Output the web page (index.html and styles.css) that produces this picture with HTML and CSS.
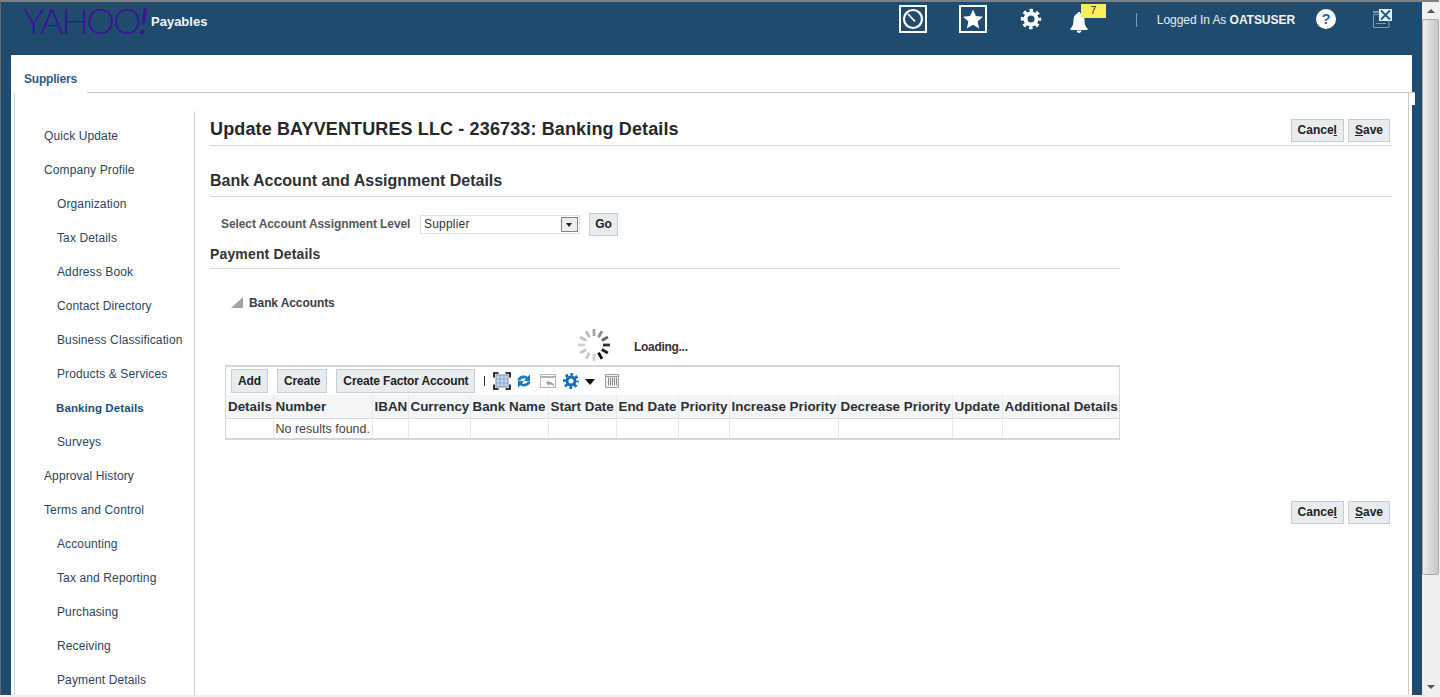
FILE: index.html
```html
<!doctype html>
<html lang="en">
  <head>
    <meta charset="UTF-8" />
    <meta name="viewport" content="width=device-width, initial-scale=1.0" />
    <title>Update BAYVENTURES LLC - 236733: Banking Details</title>
    <link rel="stylesheet" href="styles.css">
  </head>
  <body>
    <div class="window">
      <div class="app">
        <header class="header">
          <div class="logo">YAHOO<span class="logo-bang">!</span></div>
          <div class="app-name">Payables</div>
          <div class="header-tools">
            <span class="box-icon">
              <svg width="24" height="24" viewBox="0 0 24 24">
                <circle cx="12" cy="12" r="9" fill="none" stroke="#fff" stroke-width="2.200" />
                <path d="M7 7L14 14.500" stroke="#fff" stroke-width="1.800" />
              </svg>
            </span>
            <span class="box-icon box-star">
              <svg width="24" height="24" viewBox="0 0 24 24">
                <path d="M12 2.500l2.900 6.600 7.100.7-5.400 4.700 1.600 7-6.200-3.700-6.200 3.700 1.600-7L2 9.800l7.100-.7z" fill="#fff" />
              </svg>
            </span>
            <span class="gear-icon">
              <svg width="22" height="22" viewBox="0 0 22 22">
                <circle cx="11" cy="11" r="5.500" fill="none" stroke="#fff" stroke-width="4" />
                <circle cx="11" cy="11" r="8.500" fill="none" stroke="#fff" stroke-width="3.400" stroke-dasharray="3.400 3.280" stroke-dashoffset="1.700" />
              </svg>
            </span>
            <span class="bell-icon">
              <svg width="18" height="21" viewBox="0 0 18 21">
                <path d="M9 0C8 0 7.500.7 7.500 1.500 4.500 2.300 3.500 5 3.500 8c0 4-.8 6.500-3 8.500V18h17v-1.500c-2.200-2-3-4.500-3-8.500 0-3-1-5.700-4-6.500C10.500.7 10 0 9 0zM6.500 18.500C6.700 20 7.800 21 9 21s2.300-1 2.500-2.500z" fill="#fff" />
              </svg>
              <span class="badge">7</span>
            </span>
            <span class="tool-sep"></span>
            <span class="logged-in">Logged In As <b>OATSUSER</b></span>
            <span class="help-icon">?</span>
            <span class="close-icon">
              <svg width="20" height="22" viewBox="0 0 20 22">
                <path d="M0 2h6v2H0z" fill="#7d9ab3" />
                <path d="M.5 5.500h15.500v13H.5z" fill="none" stroke="#7d9ab3" />
                <path d="M3 14.500h10" stroke="#7d9ab3" />
                <rect x="6" y="0" width="13" height="12" fill="#e4f0fa" />
                <path d="M8 1.500l9 9M17 1.500l-9 9" stroke="#1f5a8e" stroke-width="1.800" />
              </svg>
            </span>
          </div>
        </header>

        <div class="frame">
          <div class="tabs">
            <div class="tab">Suppliers</div>
            <div class="tab-line"></div>
          </div>
          <div class="panel">
            <nav class="side">
              <a>Quick Update</a>
              <a>Company Profile</a>
              <a class="sub">Organization</a>
              <a class="sub">Tax Details</a>
              <a class="sub">Address Book</a>
              <a class="sub">Contact Directory</a>
              <a class="sub">Business Classification</a>
              <a class="sub">Products &amp; Services</a>
              <a class="sub current">Banking Details</a>
              <a class="sub">Surveys</a>
              <a>Approval History</a>
              <a>Terms and Control</a>
              <a class="sub">Accounting</a>
              <a class="sub">Tax and Reporting</a>
              <a class="sub">Purchasing</a>
              <a class="sub">Receiving</a>
              <a class="sub">Payment Details</a>
            </nav>

            <main class="main">
              <div class="title-row">
                <h1>Update BAYVENTURES LLC - 236733: Banking Details</h1>
                <div class="actions">
                  <button class="btn">Cance<u>l</u></button>
                  <button class="btn"><u>S</u>ave</button>
                </div>
              </div>

              <h2>Bank Account and Assignment Details</h2>

              <div class="level-row">
                <label for="level">Select Account Assignment Level</label>
                <div class="select" id="level">
                  <span>Supplier</span>
                  <span class="select-arrow"></span>
                </div>
                <button class="btn btn-go">Go</button>
              </div>

              <div class="narrow">
                <h3>Payment Details</h3>

                <div class="disclosure">
                  <svg width="12" height="12" viewBox="0 0 12 12"><path d="M12 0V11H0z" fill="#a3a3a3" /></svg>
                  <span>Bank Accounts</span>
                </div>

                <div class="loading">
                  <svg class="spinner" width="34" height="34" viewBox="-17 -17 34 34" stroke-width="2.800">
                    <line x1="0" y1="-9" x2="0" y2="-16" stroke="#a5a5a5" />
                    <line x1="0" y1="-9" x2="0" y2="-16" stroke="#8d8d8d" transform="rotate(30)" />
                    <line x1="0" y1="-9" x2="0" y2="-16" stroke="#666" transform="rotate(60)" />
                    <line x1="0" y1="-9" x2="0" y2="-16" stroke="#333" transform="rotate(90)" />
                    <line x1="0" y1="-9" x2="0" y2="-16" stroke="#222" transform="rotate(120)" />
                    <line x1="0" y1="-9" x2="0" y2="-16" stroke="#000" transform="rotate(150)" />
                    <line x1="0" y1="-9" x2="0" y2="-16" stroke="#d0d0d0" transform="rotate(180)" />
                    <line x1="0" y1="-9" x2="0" y2="-16" stroke="#c8c8c8" transform="rotate(210)" />
                    <line x1="0" y1="-9" x2="0" y2="-16" stroke="#c8c8c8" transform="rotate(240)" />
                    <line x1="0" y1="-9" x2="0" y2="-16" stroke="#d0d0d0" transform="rotate(270)" />
                    <line x1="0" y1="-9" x2="0" y2="-16" stroke="#c4c4c4" transform="rotate(300)" />
                    <line x1="0" y1="-9" x2="0" y2="-16" stroke="#bbb" transform="rotate(330)" />
                  </svg>
                  <span>Loading...</span>
                </div>

                <div class="table-box">
                  <div class="toolbar">
                    <button class="btn btn-tool">Add</button>
                    <button class="btn btn-tool">Create</button>
                    <button class="btn btn-tool">Create Factor Account</button>
                    <span class="bar-sep"></span>
                    <svg class="tb-icon tb-gap-5" width="18" height="18" viewBox="0 0 18 18">
                      <rect x="3" y="3" width="12" height="12" fill="#c6d8ee" stroke="#6d8fb8" />
                      <path d="M3 7h12M3 11h12M7 3v12M11 3v12" stroke="#8aa6c8" />
                      <path d="M1 5.500V1h4.500M12.500 1H17v4.500M17 12.500V17h-4.500M5.500 17H1v-4.500" fill="none" stroke="#000" stroke-width="1.600" />
                    </svg>
                    <svg class="tb-icon tb-gap-8" width="16" height="16" viewBox="0 0 16 16">
                      <path d="M1.500 7.500C2 3.500 7.500 1 11.500 3.800L14 1.500V8H8l2-2.200C7.800 4.600 5 5.500 4.500 7.500z" fill="#0f7cc4" />
                      <path d="M14.500 8.500C14 12.500 8.500 15 4.500 12.200L2 14.500V8h6l-2 2.200c2.200 1.200 5 .3 5.500-1.700z" fill="#0f7cc4" />
                    </svg>
                    <svg class="tb-icon tb-gap-6" width="17" height="15" viewBox="0 0 17 15">
                      <path d="M.5.500h15v13H.5z" fill="#fff" stroke="#b3b3b3" />
                      <path d="M1 3h14" stroke="#b3b3b3" stroke-width="2" />
                      <path d="M6 9l3-3v2c3 0 5 1 5 5-1-2-2.500-2.500-5-2.500V12z" fill="#a3a3a3" />
                    </svg>
                    <svg class="tb-icon" width="16" height="16" viewBox="0 0 16 16">
                      <circle cx="8" cy="8" r="4" fill="none" stroke="#0f6fbd" stroke-width="3" />
                      <circle cx="8" cy="8" r="6.500" fill="none" stroke="#0f6fbd" stroke-width="3" stroke-dasharray="2.550 2.550" stroke-dashoffset="1.270" />
                    </svg>
                    <span class="menu-arrow"></span>
                    <svg class="tb-icon" width="14" height="14" viewBox="0 0 14 14">
                      <path d="M.5.500h13v13H.5z" fill="#f2f2f2" stroke="#a0a0a0" />
                      <path d="M1 2.500h12" stroke="#a0a0a0" />
                      <path d="M3.500 3.500v8M5.500 3.500v8M7.500 3.500v8M9.500 3.500v8M11.500 3.500v8" stroke="#888" />
                    </svg>
                  </div>

                  <table class="grid">
                    <colgroup>
                      <col class="c-details" />
                      <col class="c-number" />
                      <col class="c-iban" />
                      <col class="c-currency" />
                      <col class="c-bank" />
                      <col class="c-start" />
                      <col class="c-end" />
                      <col class="c-priority" />
                      <col class="c-increase" />
                      <col class="c-decrease" />
                      <col class="c-update" />
                      <col class="c-additional" />
                    </colgroup>
                    <thead>
                      <tr>
                        <th>Details</th>
                        <th>Number</th>
                        <th>IBAN</th>
                        <th>Currency</th>
                        <th>Bank Name</th>
                        <th>Start Date</th>
                        <th>End Date</th>
                        <th>Priority</th>
                        <th>Increase Priority</th>
                        <th>Decrease Priority</th>
                        <th>Update</th>
                        <th>Additional Details</th>
                      </tr>
                    </thead>
                    <tbody>
                      <tr>
                        <td></td>
                        <td>No results found.</td>
                        <td></td>
                        <td></td>
                        <td></td>
                        <td></td>
                        <td></td>
                        <td></td>
                        <td></td>
                        <td></td>
                        <td></td>
                        <td></td>
                      </tr>
                    </tbody>
                  </table>
                </div>
              </div>

              <div class="actions actions-bottom">
                <button class="btn">Cance<u>l</u></button>
                <button class="btn"><u>S</u>ave</button>
              </div>
            </main>
          </div>
        </div>
      </div>

      <div class="scrollbar">
        <div class="scroll-btn"><span class="arrow-up"></span></div>
        <div class="scroll-thumb"></div>
        <div class="scroll-track"></div>
        <div class="scroll-btn"><span class="arrow-down"></span></div>
      </div>
    </div>
  </body>
</html>
```

FILE: styles.css
```css
* {
  box-sizing: border-box;
}

html,
body {
  margin: 0;
  padding: 0;
  height: 697px;
  overflow: hidden;
}

body {
  font-family: "Liberation Sans", Arial, sans-serif;
  font-size: 12px;
  color: #333;
  background-color: #f0f0f0;
}

.window {
  display: flex;
  height: 695px;
  border-top: 2px solid #7e8082;
  border-left: 1px solid #5d6870;
  margin-right: 1px;
}

.app {
  flex: 1;
  min-width: 0;
  display: flex;
  flex-direction: column;
  background-color: #1f4b6f;
}

/* header */
.header {
  height: 53px;
  flex-shrink: 0;
  display: flex;
  align-items: flex-start;
  padding-left: 22px;
}

.logo {
  width: 124px;
  font-family: Lato, "Liberation Sans", sans-serif;
  font-size: 36px;
  font-weight: 300;
  line-height: 36px;
  letter-spacing: -2.100px;
  color: #3d1196;
  white-space: nowrap;
}

.logo-bang {
  display: inline-block;
  transform: skewX(-8deg);
  font-weight: 400;
}

.app-name {
  margin: 12px 0 0 4px;
  color: #f2f5f8;
  font-size: 13px;
  font-weight: bold;
  line-height: 15px;
}

.header-tools {
  display: flex;
  align-items: flex-start;
  margin-left: auto;
  padding-right: 29px;
}

.box-icon {
  display: flex;
  align-items: center;
  justify-content: center;
  width: 28px;
  height: 28px;
  margin: 3px 32px 0 0;
  border: 2px solid #fff;
}

.box-star {
  margin-right: 33px;
}

.gear-icon {
  height: 22px;
  margin: 6px 28px 0 0;
}

.bell-icon {
  position: relative;
  height: 21px;
  margin: 10px 48px 0 0;
}

.badge {
  position: absolute;
  left: 11px;
  top: -8px;
  width: 25px;
  height: 14px;
  background-color: #fcee5b;
  color: #333;
  font-size: 11px;
  line-height: 13px;
  text-align: center;
}

.tool-sep {
  width: 1px;
  height: 14px;
  margin: 11px 20px 0 0;
  background-color: #7d9ab3;
}

.logged-in {
  margin: 11px 21px 0 0;
  color: #e8edf2;
  line-height: 15px;
  letter-spacing: -0.050px;
  white-space: nowrap;
}

.logged-in b {
  color: #f4f6f8;
}

.help-icon {
  width: 20px;
  height: 20px;
  margin: 7px 37px 0 0;
  border-radius: 50%;
  background-color: #fff;
  color: #2467a6;
  font-size: 15px;
  font-weight: bold;
  line-height: 20px;
  text-align: center;
}

.close-icon {
  height: 22px;
  margin-top: 7px;
}

/* white area with the tab */
.frame {
  position: relative;
  flex: 1;
  min-height: 0;
  display: flex;
  flex-direction: column;
  margin: 0 10px;
  background-color: #fff;
}

.frame::after {
  content: "";
  position: absolute;
  right: -3px;
  top: 38px;
  width: 3px;
  height: 12px;
  background-color: #fff;
}

.tabs {
  display: flex;
  height: 38px;
  flex-shrink: 0;
}

.tab {
  width: 76px;
  padding: 17px 0 0 13px;
  color: #2c5a8e;
  font-weight: bold;
  line-height: 15px;
  letter-spacing: -0.200px;
}

.tab-line {
  flex: 1;
  margin-right: -3px;
  border-bottom: 1px solid #c9cdd0;
  position: relative;
  z-index: 1;
}

.panel {
  flex: 1;
  min-height: 0;
  display: flex;
  margin: 0 3px;
  border-left: 1px solid #d3d6d9;
  border-right: 1px solid #c9cdd0;
  overflow: hidden;
}

/* left navigation */
.side {
  width: 180px;
  flex-shrink: 0;
  margin-top: 18px;
  padding: 8px 0 0 29px;
  border-right: 1px solid #d3d6d9;
}

.side a {
  display: block;
  height: 34px;
  color: #2b4560;
  line-height: 34px;
  letter-spacing: 0.120px;
  white-space: nowrap;
}

.side .sub {
  padding-left: 13px;
}

.side .current {
  padding-left: 12px;
  color: #1c4f7c;
  font-weight: bold;
  font-size: 11.500px;
  letter-spacing: 0.100px;
}

/* main column */
.main {
  flex: 1;
  min-width: 0;
  padding: 0 16px 0 15px;
}

.title-row {
  display: flex;
  justify-content: space-between;
  align-items: flex-start;
  height: 53px;
  padding-top: 25px;
  border-bottom: 1px solid #d6d9dc;
}

h1 {
  margin: 0;
  color: #25282b;
  font-size: 18px;
  font-weight: bold;
  line-height: 22px;
  letter-spacing: 0.130px;
}

.actions {
  display: flex;
  gap: 4px;
  margin-right: 2px;
}

.btn {
  height: 23px;
  padding: 0 6px;
  border: 1px solid #c6ced5;
  background-color: #e9ecef;
  color: #222;
  font-family: inherit;
  font-size: 12px;
  font-weight: bold;
  line-height: 21px;
  white-space: nowrap;
}

.title-row .btn {
  margin-top: 1px;
}

h2 {
  height: 51px;
  margin: 0;
  padding-top: 26px;
  border-bottom: 1px solid #d6d9dc;
  color: #2c3136;
  font-size: 16px;
  font-weight: bold;
  line-height: 18px;
}

.level-row {
  display: flex;
  align-items: center;
  height: 22px;
  margin-top: 16px;
  padding-left: 11px;
}

.level-row label {
  width: 199px;
  color: #55595d;
  font-weight: bold;
  letter-spacing: -0.080px;
}

.select {
  display: flex;
  justify-content: space-between;
  align-items: center;
  width: 160px;
  height: 19px;
  padding: 0 1px 0 3px;
  border: 1px solid #dfe3e6;
  color: #333;
  letter-spacing: 0.200px;
}

.select-arrow {
  position: relative;
  width: 17px;
  height: 15px;
  border: 1px solid #7f8488;
  background-color: #eceef0;
}

.select-arrow::after {
  content: "";
  position: absolute;
  left: 4px;
  top: 5px;
  border-left: 3.500px solid transparent;
  border-right: 3.500px solid transparent;
  border-top: 4px solid #222;
}

.btn-go {
  width: 29px;
  margin-left: 9px;
  padding: 0;
}

.narrow {
  width: 910px;
}

h3 {
  height: 34px;
  margin: 0;
  padding-top: 11px;
  border-bottom: 1px solid #d6d9dc;
  color: #333;
  font-size: 14px;
  font-weight: bold;
  line-height: 16px;
  letter-spacing: 0.150px;
}

.disclosure {
  display: flex;
  align-items: center;
  gap: 6px;
  height: 16px;
  margin: 26px 0 0 21px;
  color: #3a3f44;
  font-weight: bold;
  letter-spacing: -0.100px;
}

.loading {
  display: flex;
  align-items: center;
  height: 34px;
  margin-top: 17px;
  padding-left: 367px;
  color: #333;
  font-weight: bold;
}

.loading span {
  margin: 3px 0 0 23px;
  letter-spacing: -0.300px;
}

.table-box {
  width: 895px;
  margin: 3px 0 0 15px;
  border: 2px solid #cfd8df;
  border-left-width: 1px;
  border-right-width: 1px;
}

.toolbar {
  display: flex;
  align-items: center;
  height: 28px;
  padding-left: 5px;
}

.btn-tool {
  height: 24px;
  margin-right: 9px;
  letter-spacing: -0.150px;
}

.bar-sep {
  width: 1px;
  height: 10px;
  margin-right: 8px;
  background-color: #333;
}

.tb-icon {
  flex-shrink: 0;
}

.tb-gap-5 {
  margin-right: 5px;
}

.tb-gap-6 {
  margin-right: 6px;
}

.tb-gap-8 {
  margin-right: 8px;
}

.menu-arrow {
  width: 0;
  margin: 2px 10px 0 6px;
  border-left: 5px solid transparent;
  border-right: 5px solid transparent;
  border-top: 6px solid #111;
}

.grid {
  table-layout: fixed;
  width: 893px;
  border-collapse: collapse;
}

.c-details { width: 47px; }
.c-number { width: 99px; }
.c-iban { width: 36px; }
.c-currency { width: 62px; }
.c-bank { width: 78px; }
.c-start { width: 68px; }
.c-end { width: 62px; }
.c-priority { width: 51px; }
.c-increase { width: 109px; }
.c-decrease { width: 114px; }
.c-update { width: 50px; }
.c-additional { width: 117px; }

.grid th {
  height: 23px;
  padding: 1px 2px 0;
  border-right: 1px solid #e6e8ea;
  border-bottom: 1px solid #d9dde0;
  background-color: #f4f5f7;
  color: #2c3035;
  font-size: 13.400px;
  font-weight: bold;
  text-align: left;
  white-space: nowrap;
}

.grid td {
  height: 20px;
  padding: 1px 1px 0;
  border-right: 1px solid #e6e8ea;
  color: #444;
  font-size: 12.500px;
  white-space: nowrap;
}

.grid td:nth-child(2) {
  padding-left: 2px;
}

.grid th:last-child,
.grid td:last-child {
  border-right: 0;
}

.actions-bottom {
  justify-content: flex-end;
  margin-top: 61px;
}

/* browser scrollbar */
.scrollbar {
  width: 17px;
  flex-shrink: 0;
  display: flex;
  flex-direction: column;
  background-color: #f0f0f0;
}

.scroll-btn {
  height: 17px;
  flex-shrink: 0;
  display: flex;
  align-items: center;
  justify-content: center;
}

.arrow-up {
  border-left: 4px solid transparent;
  border-right: 4px solid transparent;
  border-bottom: 4px solid #555;
}

.arrow-down {
  border-left: 4px solid transparent;
  border-right: 4px solid transparent;
  border-top: 4px solid #555;
}

.scroll-thumb {
  height: 556px;
  flex-shrink: 0;
  border: 1px solid #a9a9a9;
  border-radius: 2px;
  background: linear-gradient(to right, #eee, #d8d8d8 50%, #c8c8c8);
}

.scroll-track {
  flex: 1;
}
```
